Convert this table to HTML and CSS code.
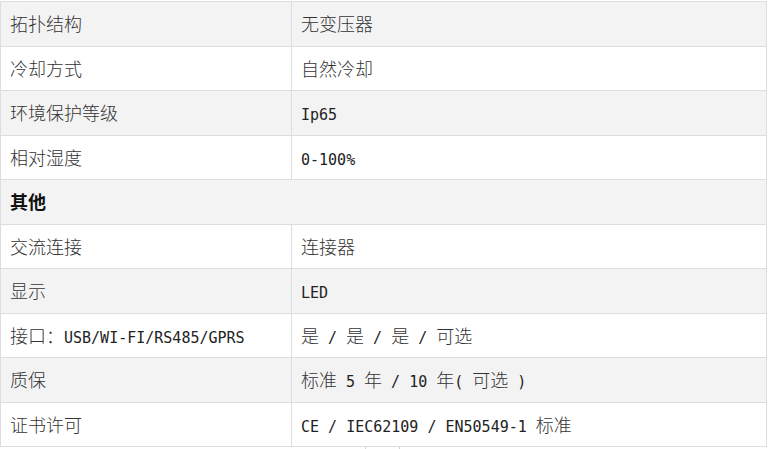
FILE: index.html
```html
<!DOCTYPE html>
<html lang="zh-CN">
<head>
<meta charset="utf-8">
<title>参数表</title>
<link rel="stylesheet" href="styles.css">
</head>
<body>
<table class="spec">
  <colgroup><col class="c1"><col class="c2"></colgroup>
  <tbody>
    <tr class="alt"><td>拓扑结构</td><td>无变压器</td></tr>
    <tr><td>冷却方式</td><td>自然冷却</td></tr>
    <tr class="alt"><td>环境保护等级</td><td><span class="en">Ip65</span></td></tr>
    <tr><td>相对湿度</td><td><span class="en">0-100%</span></td></tr>
    <tr class="alt group"><td colspan="2">其他</td></tr>
    <tr><td>交流连接</td><td>连接器</td></tr>
    <tr class="alt"><td>显示</td><td><span class="en">LED</span></td></tr>
    <tr><td>接口：<span class="en">USB/WI-FI/RS485/GPRS</span></td><td>是<span class="en"> / </span>是<span class="en"> / </span>是<span class="en"> / </span>可选</td></tr>
    <tr class="alt"><td>质保</td><td>标准<span class="en"> 5 </span>年<span class="en"> / 10 </span>年<span class="en">( </span>可选<span class="en"> )</span></td></tr>
    <tr><td>证书许可</td><td><span class="en">CE / IEC62109 / EN50549-1 </span>标准</td></tr>
  </tbody>
</table>
<div class="pager"></div>
</body>
</html>
```

FILE: styles.css
```css
html, body {
  margin: 0;
  padding: 0;
  background: #fff;
}
body {
  padding-top: 1px;
  font-family: "Noto Sans CJK SC", "Noto Sans", sans-serif;
  font-size: 18px;
  color: #333;
}
.spec {
  border-collapse: collapse;
  width: 767px;
  table-layout: fixed;
}
.c1 { width: 291px; }
.spec td {
  border: 1px solid #dddddd;
  padding: 8px 9px 8px 9px;
  line-height: 27.5px;
  height: 27.5px;
  vertical-align: middle;
  white-space: nowrap;
  font-weight: 300;
  overflow: hidden;
}
.spec tr.alt td {
  background: #f3f3f3;
}
.spec tr.group td {
  font-weight: 700;
  color: #111;
}
.en {
  font-family: "DejaVu Sans Mono", monospace;
  font-size: 15px;
  font-weight: 400;
  line-height: 0;
  white-space: pre;
  color: #222;
}
.pager {
  margin-left: 365px;
  width: 33px;
  height: 2px;
  border-left: 1px solid #cfcfcf;
  border-right: 1px solid #cfcfcf;
}
```
